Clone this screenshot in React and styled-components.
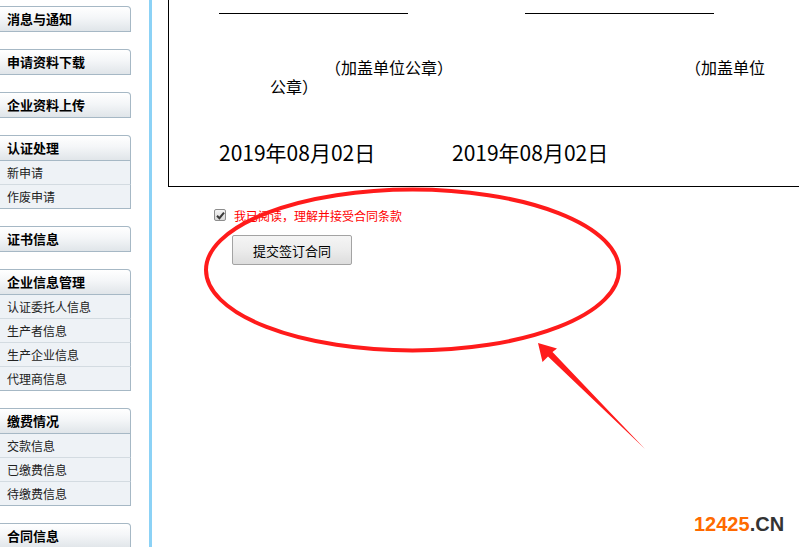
import React from "react";
import styled, { createGlobalStyle } from "styled-components";

const GlobalStyle = createGlobalStyle`
  html, body { margin: 0; padding: 0; background: #fff; overflow: hidden; }
  body { font-family: "Noto Sans CJK SC", "Noto Sans", sans-serif; color: #000; }
  * { box-sizing: border-box; }
`;

const Page = styled.div`
  position: relative;
  display: flex;
  width: 799px;
  height: 547px;
  overflow: hidden;
`;

const Sidebar = styled.nav`
  width: 131px;
  flex-shrink: 0;
  padding-top: 6px;
  display: flex;
  flex-direction: column;
  gap: 17px;
`;

const Section = styled.div`
  display: flex;
  flex-direction: column;
`;

const SectionHeader = styled.div`
  height: 26px;
  padding-left: 7px;
  padding-bottom: 1px;
  display: flex;
  align-items: center;
  font-size: 13px;
  font-weight: 700;
  color: #000;
  background: linear-gradient(to bottom, #ffffff 0%, #f4f6f8 45%, #e0e5e9 100%);
  border: 1px solid #a6b8c5;
  border-left: none;
  border-top-right-radius: 4px;
`;

const Item = styled.div`
  height: 24px;
  padding-left: 7px;
  display: flex;
  align-items: center;
  font-size: 12px;
  color: #222;
  background: #eef2f6;
  border-right: 1px solid #a6b8c5;
  border-bottom: 1px solid ${(p) => (p.$last ? "#a6b8c5" : "#d3dbe1")};
`;

const Divider = styled.div`
  width: 3px;
  margin-left: 18px;
  flex-shrink: 0;
  background: #8cd2f6;
`;

const Main = styled.main`
  margin-left: 16px;
  flex: 1;
  min-width: 0;
  display: flex;
  flex-direction: column;
`;

const ContractBox = styled.div`
  width: 700px;
  height: 187px;
  flex-shrink: 0;
  border: 1px solid #000;
  border-top: none;
  padding-left: 50px;
  display: flex;
  flex-direction: column;
`;

const SignRow = styled.div`
  display: flex;
  gap: 117px;
`;

const SignLine = styled.div`
  width: 189px;
  height: 14px;
  border-bottom: 1px solid #000;
`;

const SealBlock = styled.div`
  margin-top: 44px;
  padding-left: 51px;
  display: flex;
  flex-direction: column;
  font-size: 16px;
  line-height: 19px;
`;

const SealLine = styled.div`
  display: flex;
  white-space: nowrap;
`;

const Seal = styled.span`
  margin-left: ${(p) => p.$gap || 0}px;
`;

const Paren = styled.span`
  display: inline-block;
  width: 16px;
  text-align: ${(p) => (p.$close ? "left" : "right")};
`;

const DateRow = styled.div`
  margin-top: 44px;
  display: flex;
  font-size: 21px;
  line-height: 24px;
`;

const DateText = styled.span`
  width: ${(p) => p.$width || "auto"};
`;

const AgreeRow = styled.label`
  margin-top: 20px;
  padding-left: 46px;
  height: 16px;
  display: flex;
  align-items: center;
  gap: 8px;
  font-size: 12px;
  color: #ff0000;
`;

const CheckBox = styled.span`
  width: 12px;
  height: 12px;
  border: 1px solid #8d8d8d;
  border-radius: 2px;
  background: linear-gradient(to bottom, #f4f4f4, #d8d8d8);
  display: flex;
  align-items: center;
  justify-content: center;
`;

const SubmitButton = styled.button`
  margin: 12px 0 0 64px;
  width: 120px;
  height: 30px;
  font-family: "Noto Sans CJK SC", sans-serif;
  font-size: 13px;
  color: #000;
  background: linear-gradient(to bottom, #f5f5f5 0%, #ececec 50%, #dddddd 100%);
  border: 1px solid #a3a3a3;
  border-radius: 2px;
  padding: 0;
`;

const Annotation = styled.svg`
  position: absolute;
  left: 0;
  top: 0;
  pointer-events: none;
`;

const Watermark = styled.div`
  position: absolute;
  left: 694px;
  top: 514px;
  font-family: "Liberation Sans", Arial, sans-serif;
  font-weight: 700;
  font-size: 20px;
  line-height: 20px;
  color: #333;
`;

const WatermarkNum = styled.span`
  color: #ff6a00;
`;

const menu = [
  { title: "消息与通知" },
  { title: "申请资料下载" },
  { title: "企业资料上传" },
  { title: "认证处理", items: ["新申请", "作废申请"] },
  { title: "证书信息" },
  { title: "企业信息管理", items: ["认证委托人信息", "生产者信息", "生产企业信息", "代理商信息"] },
  { title: "缴费情况", items: ["交款信息", "已缴费信息", "待缴费信息"] },
  { title: "合同信息" },
];

export default function App() {
  return (
    <>
      <GlobalStyle />
      <Page>
        <Sidebar>
          {menu.map((s) => (
            <Section key={s.title}>
              <SectionHeader>{s.title}</SectionHeader>
              {(s.items || []).map((it, i) => (
                <Item key={it} $last={i === s.items.length - 1}>
                  {it}
                </Item>
              ))}
            </Section>
          ))}
        </Sidebar>
        <Divider />
        <Main>
          <ContractBox>
            <SignRow>
              <SignLine />
              <SignLine />
            </SignRow>
            <SealBlock>
              <SealLine>
                <Seal $gap={55}>
                  <Paren>（</Paren>加盖单位公章<Paren $close>）</Paren>
                </Seal>
                <Seal $gap={232}>
                  <Paren>（</Paren>加盖单位
                </Seal>
              </SealLine>
              <SealLine>
                <Seal>
                  公章<Paren $close>）</Paren>
                </Seal>
              </SealLine>
            </SealBlock>
            <DateRow>
              <DateText $width="233px">2019年08月02日</DateText>
              <DateText>2019年08月02日</DateText>
            </DateRow>
          </ContractBox>
          <AgreeRow>
            <CheckBox>
              <svg width="9" height="9" viewBox="0 0 9 9">
                <path d="M1 4.8 L3.4 7.2 L8 1.6" fill="none" stroke="#3a3a3a" strokeWidth="2" />
              </svg>
            </CheckBox>
            我已阅读，理解并接受合同条款
          </AgreeRow>
          <SubmitButton>提交签订合同</SubmitButton>
        </Main>
        <Annotation width="799" height="547" viewBox="0 0 799 547">
          <ellipse cx="412.5" cy="270" rx="206.5" ry="80.5" fill="none" stroke="#ff1b1b" strokeWidth="4" />
          <polygon
            points="538,343 557,348.5 552.5,352 645,449 548,356.5 542.5,362"
            fill="#ff1b1b"
          />
        </Annotation>
        <Watermark>
          <WatermarkNum>12425</WatermarkNum>.CN
        </Watermark>
      </Page>
    </>
  );
}
